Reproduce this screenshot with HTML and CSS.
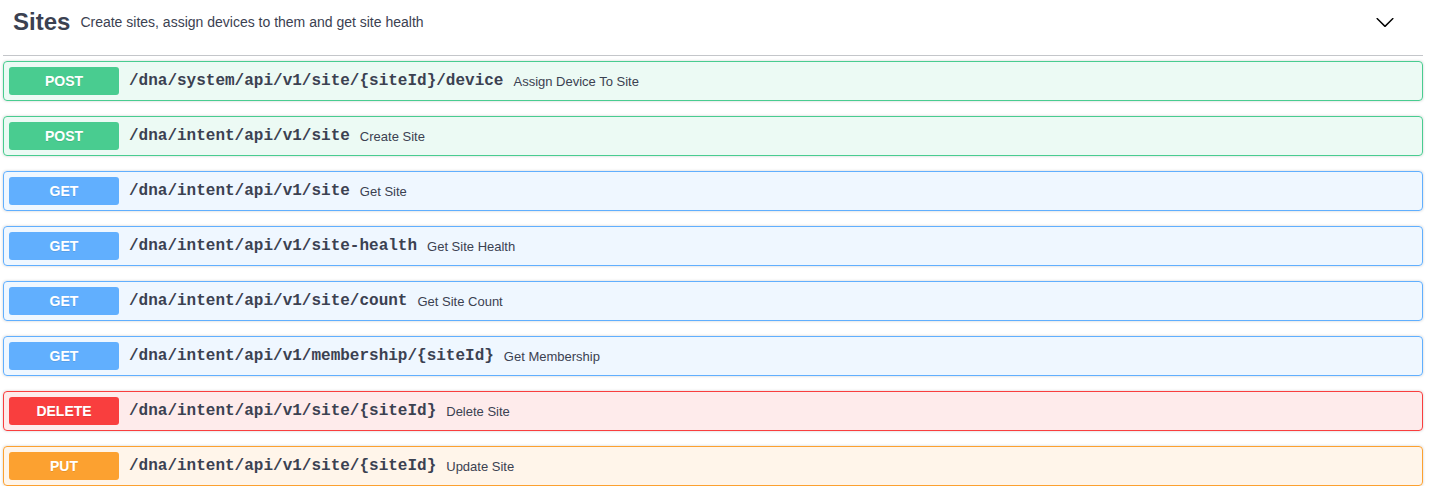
FILE: index.html
```html
<!DOCTYPE html>
<html>
<head>
<meta charset="utf-8">
<link rel="stylesheet" href="styles.css">
</head>
<body>
<div class="wrap">
  <h3 class="tag">
    <span class="tag-name">Sites</span>
    <small class="tag-desc">Create sites, assign devices to them and get site health</small>
    <button class="expand" aria-label="collapse">
      <svg width="20" height="20" viewBox="0 0 20 20"><path fill="#000" d="M17.418 6.109c.272-.268.709-.268.979 0s.271.701 0 .969l-7.908 7.83c-.27.268-.707.268-.979 0l-7.908-7.83c-.27-.268-.27-.701 0-.969.271-.268.709-.268.979 0L10 13.250l7.418-7.141z"/></svg>
    </button>
  </h3>
  <div class="ops">
    <div class="op post"><span class="method">POST</span><span class="path">/dna/system/api/v1/site/{siteId}/device</span><span class="summary">Assign Device To Site</span></div>
    <div class="op post"><span class="method">POST</span><span class="path">/dna/intent/api/v1/site</span><span class="summary">Create Site</span></div>
    <div class="op get"><span class="method">GET</span><span class="path">/dna/intent/api/v1/site</span><span class="summary">Get Site</span></div>
    <div class="op get"><span class="method">GET</span><span class="path">/dna/intent/api/v1/site-health</span><span class="summary">Get Site Health</span></div>
    <div class="op get"><span class="method">GET</span><span class="path">/dna/intent/api/v1/site/count</span><span class="summary">Get Site Count</span></div>
    <div class="op get"><span class="method">GET</span><span class="path">/dna/intent/api/v1/membership/{siteId}</span><span class="summary">Get Membership</span></div>
    <div class="op delete"><span class="method">DELETE</span><span class="path">/dna/intent/api/v1/site/{siteId}</span><span class="summary">Delete Site</span></div>
    <div class="op put"><span class="method">PUT</span><span class="path">/dna/intent/api/v1/site/{siteId}</span><span class="summary">Update Site</span></div>
  </div>
</div>
</body>
</html>
```

FILE: styles.css
```css
html, body {
  margin: 0;
  padding: 0;
  background: #fff;
}
body {
  font-family: "Liberation Sans", Arial, sans-serif;
  color: #3b4151;
}
.wrap {
  padding: 0 6px 0 3px;
}
.tag {
  display: flex;
  align-items: center;
  margin: 0 0 5px;
  padding: 8px 20px 19px 10px;
  border-bottom: 1px solid rgba(59, 65, 81, 0.3);
  font-size: 24px;
  line-height: 28px;
  font-weight: 700;
  color: #3b4151;
}
.tag-desc {
  flex: 1;
  padding: 0 10px;
  font-size: 14px;
  font-weight: 400;
  line-height: 18px;
}
.expand {
  display: flex;
  border: 0;
  background: none;
  padding: 0 8px 0 0;
  margin: 0;
}
.ops {
  display: flex;
  flex-direction: column;
  gap: 15px;
}
.op {
  display: flex;
  align-items: center;
  padding: 5px;
  border: 1px solid;
  border-radius: 4px;
  box-shadow: 0 0 3px rgba(0, 0, 0, 0.19);
}
.method {
  min-width: 80px;
  padding: 6px 15px;
  border-radius: 3px;
  font-size: 14px;
  line-height: 16px;
  font-weight: 700;
  color: #fff;
  text-align: center;
  text-shadow: 0 1px 0 rgba(0, 0, 0, 0.1);
}
.path {
  padding: 0 10px;
  font-family: "Liberation Mono", "Courier New", monospace;
  font-size: 16px;
  font-weight: 700;
  color: #3b4151;
}
.summary {
  font-size: 13px;
  color: #3b4151;
}
.post { border-color: #49cc90; background: rgba(73, 204, 144, 0.1); }
.post .method { background: #49cc90; }
.get { border-color: #61affe; background: rgba(97, 175, 254, 0.1); }
.get .method { background: #61affe; }
.delete { border-color: #f93e3e; background: rgba(249, 62, 62, 0.1); }
.delete .method { background: #f93e3e; }
.put { border-color: #fca130; background: rgba(252, 161, 48, 0.1); }
.put .method { background: #fca130; }
```
